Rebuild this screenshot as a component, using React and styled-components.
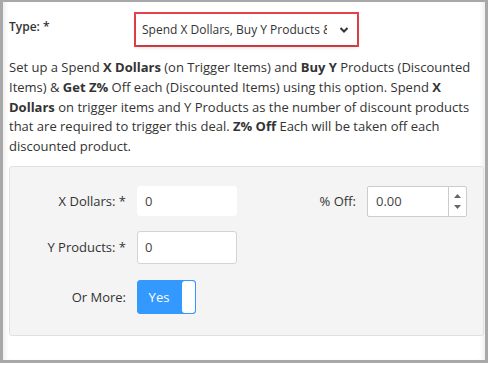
import React from 'react'
import styled, { createGlobalStyle } from 'styled-components'

const Global = createGlobalStyle`
  html, body {
    margin: 0;
    padding: 0;
    background: #fff;
  }
  body {
    font-family: "Open Sans", "Noto Sans", Arial, sans-serif;
    color: #333;
  }
`

const Frame = styled.div`
  box-sizing: border-box;
  width: 488px;
  height: 363px;
  border: 2px solid #a8a8a8;
  border-left-width: 3px;
  border-right-width: 3px;
  border-bottom-width: 3px;
  box-shadow: inset 5px 0 5px -3px rgba(0, 0, 0, 0.08),
    inset -5px 0 5px -3px rgba(0, 0, 0, 0.08);
  padding: 10px 2px 0 6px;
`

const TypeRow = styled.div`
  display: flex;
  align-items: flex-start;
`

const TypeLabel = styled.div`
  width: 125px;
  font-size: 12px;
  font-weight: 600;
  line-height: 16px;
  padding-top: 7px;
`

const Highlight = styled.div`
  box-sizing: border-box;
  width: 225px;
  height: 35px;
  border: 2px solid #e8434a;
`

const Select = styled.div`
  box-sizing: border-box;
  height: 31px;
  display: flex;
  align-items: center;
  padding: 0 8px 0 6px;
  background: #fff;
  box-shadow: 0 2px 4px rgba(0, 0, 0, 0.18);
  font-size: 12px;
  color: #333;
`

const SelectText = styled.span`
  flex: 0 0 185px;
  white-space: nowrap;
  overflow: hidden;
`

const ChevronIcon = styled.svg`
  margin-left: auto;
`

const Chevron = () => (
  <ChevronIcon width="10" height="8" viewBox="0 0 10 8">
    <path d="M1.5 2 L5 5.5 L8.5 2" fill="none" stroke="#333" strokeWidth="2" />
  </ChevronIcon>
)

const Description = styled.p`
  margin: 11px 0 0;
  font-size: 13px;
  line-height: 19.8px;
  width: 474px;
  color: #333;

  b {
    font-weight: 700;
  }
`

const Panel = styled.div`
  box-sizing: border-box;
  margin-top: 9px;
  width: 475px;
  height: 170px;
  background: #f4f4f4;
  border: 1px solid #e0e0e0;
  border-radius: 3px;
  padding: 19px 16px 0 0;
  display: grid;
  grid-template-columns: 116px 100px 108px 100px;
  align-content: start;
  align-items: center;
  column-gap: 11px;
`

const Label = styled.label`
  font-size: 13px;
  text-align: right;
  color: #333;
`

const Input = styled.div`
  box-sizing: border-box;
  height: ${p => p.$h}px;
  background: #fff;
  border: 1px solid ${p => p.$borderless ? '#fff' : '#d4d4d4'};
  border-radius: 3px;
  font-size: 13px;
  display: flex;
  align-items: center;
  padding-left: 7px;
  color: #444;
`

const Spin = styled.div`
  box-sizing: border-box;
  height: 31px;
  background: #fff;
  border: 1px solid #ccc;
  border-radius: 2px;
  display: flex;
  font-size: 13px;
  color: #444;
`

const SpinValue = styled.div`
  flex: 1;
  display: flex;
  align-items: center;
  padding-left: 8px;
`

const SpinButtons = styled.div`
  width: 17px;
  border-left: 1px solid #ccc;
  display: flex;
  flex-direction: column;
  align-items: center;
  justify-content: space-around;
  padding: 3px 0;
`

const Arrow = ({ down }) => (
  <svg width="7" height="4" viewBox="0 0 7 4">
    <path d={down ? 'M0 0 L7 0 L3.5 4 Z' : 'M0 4 L7 4 L3.5 0 Z'} fill="#666" />
  </svg>
)

const Toggle = styled.div`
  box-sizing: border-box;
  width: 59px;
  height: 34px;
  background: #3399ff;
  border: 1px solid #3399ff;
  border-radius: 3px;
  display: flex;
  align-items: stretch;
  color: #fff;
  font-size: 13px;
`

const ToggleText = styled.div`
  flex: 1;
  display: flex;
  align-items: center;
  justify-content: center;
  padding-right: 2px;
`

const Knob = styled.div`
  width: 13px;
  background: #fff;
  border-radius: 3px;
`

const RowGap = styled.div`
  grid-column: 1 / -1;
  height: ${p => p.$h}px;
`

const Spacer = styled.div`
  grid-column: span 2;
`

export default () => (
  <>
    <Global />
    <Frame>
      <TypeRow>
        <TypeLabel>Type: *</TypeLabel>
        <Highlight>
          <Select>
            <SelectText>Spend X Dollars, Buy Y Products &amp; Get Z% Off</SelectText>
            <Chevron />
          </Select>
        </Highlight>
      </TypeRow>
      <Description>
        Set up a Spend <b>X Dollars</b> (on Trigger Items) and <b>Buy Y</b> Products (Discounted
        Items) &amp; <b>Get Z%</b> Off each (Discounted Items) using this option. Spend <b>X
        Dollars</b> on trigger items and Y Products as the number of discount products
        that are required to trigger this deal. <b>Z% Off</b> Each will be taken off each
        discounted product.
      </Description>
      <Panel>
        <Label>X Dollars: *</Label>
        <Input $h={30} $borderless>0</Input>
        <Label>% Off:</Label>
        <Spin>
          <SpinValue>0.00</SpinValue>
          <SpinButtons>
            <Arrow />
            <Arrow down />
          </SpinButtons>
        </Spin>

        <RowGap $h={14} />

        <Label>Y Products: *</Label>
        <Input $h={33}>0</Input>
        <Spacer />

        <RowGap $h={16} />

        <Label>Or More:</Label>
        <Toggle>
          <ToggleText>Yes</ToggleText>
          <Knob />
        </Toggle>
        <Spacer />
      </Panel>
    </Frame>
  </>
)
